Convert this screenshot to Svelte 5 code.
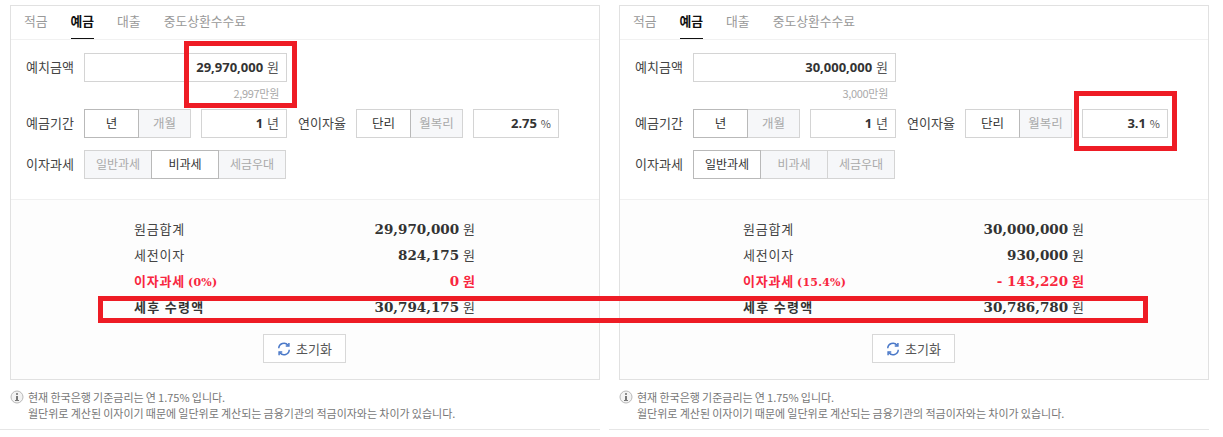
<script>
  const panels = [
    {
      amount: '29,970,000', man: '2,997만원', rate: '2.75', taxIdx: 1,
      pct: '(0%)', rows: ['29,970,000', '824,175', '0', '30,794,175']
    },
    {
      amount: '30,000,000', man: '3,000만원', rate: '3.1', taxIdx: 0,
      pct: '(15.4%)', rows: ['30,000,000', '930,000', '- 143,220', '30,786,780']
    }
  ];
  const tabs = ['적금', '예금', '대출', '중도상환수수료'];
  const taxTypes = ['일반과세', '비과세', '세금우대'];
</script>

<div class="page">
  <div class="columns">
    {#each panels as p}
      <section class="col">
        <div class="panel">
          <nav class="tabs">
            {#each tabs as t, i}
              <span class="tab" class:on={i === 1}>{t}</span>
            {/each}
          </nav>

          <div class="form">
            <div class="row first">
              <span class="label">예치금액</span>
              <div class="field wide"><b>{p.amount}</b> 원</div>
            </div>
            <div class="man">{p.man}</div>
            <div class="row">
              <span class="label">예금기간</span>
              <div class="seg short">
                <span class="on">년</span><span>개월</span>
              </div>
              <div class="field num"><b>1</b> 년</div>
              <span class="label rate">연이자율</span>
              <div class="seg short alt">
                <span class="on">단리</span><span>월복리</span>
              </div>
              <div class="field num"><b>{p.rate}</b> <small>%</small></div>
            </div>
            <div class="row third">
              <span class="label">이자과세</span>
              <div class="seg tax">
                {#each taxTypes as t, i}
                  <span class:on={i === p.taxIdx}>{t}</span>
                {/each}
              </div>
            </div>
          </div>

          <div class="result">
            <dl>
              <div><dt>원금합계</dt><dd><b>{p.rows[0]}</b> 원</dd></div>
              <div><dt>세전이자</dt><dd><b>{p.rows[1]}</b> 원</dd></div>
              <div class="red"><dt>이자과세<em>{p.pct}</em></dt><dd><b>{p.rows[2]}</b> 원</dd></div>
              <div class="total"><dt>세후 수령액</dt><dd><b>{p.rows[3]}</b> 원</dd></div>
            </dl>
            <button class="reset" type="button">
              <svg width="14" height="14" viewBox="0 0 16 16" fill="none" stroke="#4a78c8" stroke-width="1.7">
                <path d="M2 7.2A6 6 0 0 1 12.6 3.6" />
                <path d="M14 8.8A6 6 0 0 1 3.4 12.4" />
                <path d="M13.6 1v3.6H10" />
                <path d="M2.4 15v-3.6H6" />
              </svg>
              초기화
            </button>
          </div>
        </div>

        <div class="note">
          <svg class="info" width="14" height="14" viewBox="0 0 14 14">
            <circle cx="7" cy="7" r="6" fill="#f3f3f3" stroke="#b9b9b9" />
            <rect x="6" y="6" width="2" height="4.4" fill="#777" />
            <rect x="5" y="10" width="4" height="1" fill="#777" />
            <rect x="6" y="3.2" width="2" height="1.6" fill="#777" />
          </svg>
          <p>현재 한국은행 기준금리는 연 1.75% 입니다.<br />월단위로 계산된 이자이기 때문에 일단위로 계산되는 금융기관의 적금이자와는 차이가 있습니다.</p>
        </div>
        <div class="rule"></div>
      </section>
    {/each}
  </div>

  <i class="mark m1"></i>
  <i class="mark m2"></i>
  <i class="mark m3"></i>
</div>

<style>
  :global(body) {
    margin: 0;
    background: #fff;
  }

  .page {
    position: relative;
    width: 1223px;
    height: 437px;
    overflow: hidden;
    font-family: "Noto Sans CJK KR", "Noto Sans", sans-serif;
    font-size: 13px;
    color: #444;
    padding-top: 5px;
    box-sizing: border-box;
  }

  .columns {
    display: flex;
    gap: 19px;
    padding-left: 10px;
  }

  .col {
    width: 590px;
  }

  .panel {
    border: 1px solid #e1e1e1;
    height: 375px;
    box-sizing: border-box;
    display: flex;
    flex-direction: column;
  }

  .tabs {
    display: flex;
    gap: 23px;
    height: 33px;
    padding-left: 13px;
    border-bottom: 1px solid #f1f1f1;
    font-size: 12.8px;
  }

  .tab {
    color: #999;
    line-height: 30px;
    height: 33px;
    box-sizing: border-box;
  }

  .tab.on {
    color: #111;
    font-weight: 700;
    border-bottom: 1px solid #111;
  }

  .form {
    height: 160px;
    padding: 13px 0 0 15px;
    box-sizing: border-box;
    border-bottom: 1px solid #f0f0f0;
  }

  .row {
    display: flex;
    align-items: stretch;
    height: 29px;
  }

  .third {
    margin-top: 12px;
  }

  .label {
    width: 58px;
    flex: none;
    line-height: 28px;
    color: #444;
  }

  .label.rate {
    margin-left: 11px;
  }

  .field {
    border: 1px solid #d4d4d4;
    box-sizing: border-box;
    text-align: right;
    padding-right: 7px;
    line-height: 26px;
    color: #555;
  }

  .field b {
    font-family: "Noto Sans", sans-serif;
    font-size: 13px;
    color: #333;
    margin-right: 1px;
  }

  .field small {
    font-size: 11px;
  }

  .wide {
    width: 203px;
  }

  .num {
    width: 86px;
    margin-left: 10px;
  }

  .man {
    height: 27px;
    width: 261px;
    text-align: right;
    padding-right: 8px;
    box-sizing: border-box;
    font-size: 11px;
    line-height: 22px;
    letter-spacing: -0.3px;
    color: #aaa;
  }

  .seg {
    display: flex;
    font-size: 12.5px;
  }

  .seg span {
    border: 1px solid #d4d4d4;
    margin-left: -1px;
    background: #f6f7f9;
    color: #aaa;
    text-align: center;
    line-height: 26px;
    box-sizing: border-box;
  }

  .seg span:first-child {
    margin-left: 0;
  }

  .seg span.on {
    background: #fff;
    color: #333;
    border-color: #b9b9b9;
    position: relative;
  }

  .seg.alt span.on {
    border-color: #d4d4d4 #b9b9b9 #d4d4d4 #d4d4d4;
  }

  .short span {
    width: 55px;
  }

  .short span + span {
    width: 53px;
  }

  .seg.tax {
    font-size: 12px;
  }

  .tax span {
    width: 68px;
  }

  .result {
    flex: 1;
    background: #fdfdfd;
    display: flex;
    flex-direction: column;
  }

  dl {
    margin: 15px 0 0;
  }

  dl div {
    display: flex;
    justify-content: space-between;
    align-items: center;
    height: 26px;
    width: 341px;
    margin-left: 123px;
  }

  dt {
    color: #444;
    letter-spacing: 0.8px;
  }

  dt em {
    font-family: "DejaVu Serif", serif;
    font-style: normal;
    font-size: 11px;
    letter-spacing: 0.2px;
    margin-left: 3px;
  }

  dd {
    margin: 0;
    color: #444;
  }

  dd b {
    font-family: "DejaVu Serif", serif;
    font-size: 13.5px;
    color: #333;
    margin-right: 1px;
  }

  .red dt,
  .red dd,
  .red dd b {
    color: #f8273f;
    font-weight: 700;
  }

  .total dt {
    font-weight: 700;
    color: #333;
    letter-spacing: 1.3px;
  }

  .reset {
    align-self: flex-start;
    margin: 15px 0 0 252px;
    width: 83px;
    height: 29px;
    display: flex;
    align-items: center;
    justify-content: center;
    gap: 5px;
    background: #fff;
    border: 1px solid #d8d8d8;
    font: inherit;
    color: #555;
    padding: 0;
  }

  .note {
    display: flex;
    gap: 4px;
    padding-top: 9px;
    color: #777;
    font-size: 11px;
    line-height: 16px;
    word-spacing: -0.3px;
    height: 41px;
    box-sizing: border-box;
  }

  .info {
    flex: none;
    margin-top: 1px;
  }

  .note p {
    margin: 0;
    white-space: nowrap;
  }

  .rule {
    margin: 8px 0 0 -10px;
    border-top: 1px solid #e6e6e6;
    width: 600px;
  }

  .mark {
    position: absolute;
    border: 5px solid #ee1c25;
    box-sizing: border-box;
  }

  .m1 {
    left: 184px;
    top: 41px;
    width: 113px;
    height: 67px;
  }

  .m2 {
    left: 1074px;
    top: 91px;
    width: 103px;
    height: 60px;
  }

  .m3 {
    left: 98px;
    top: 296px;
    width: 1050px;
    height: 27px;
  }
</style>
